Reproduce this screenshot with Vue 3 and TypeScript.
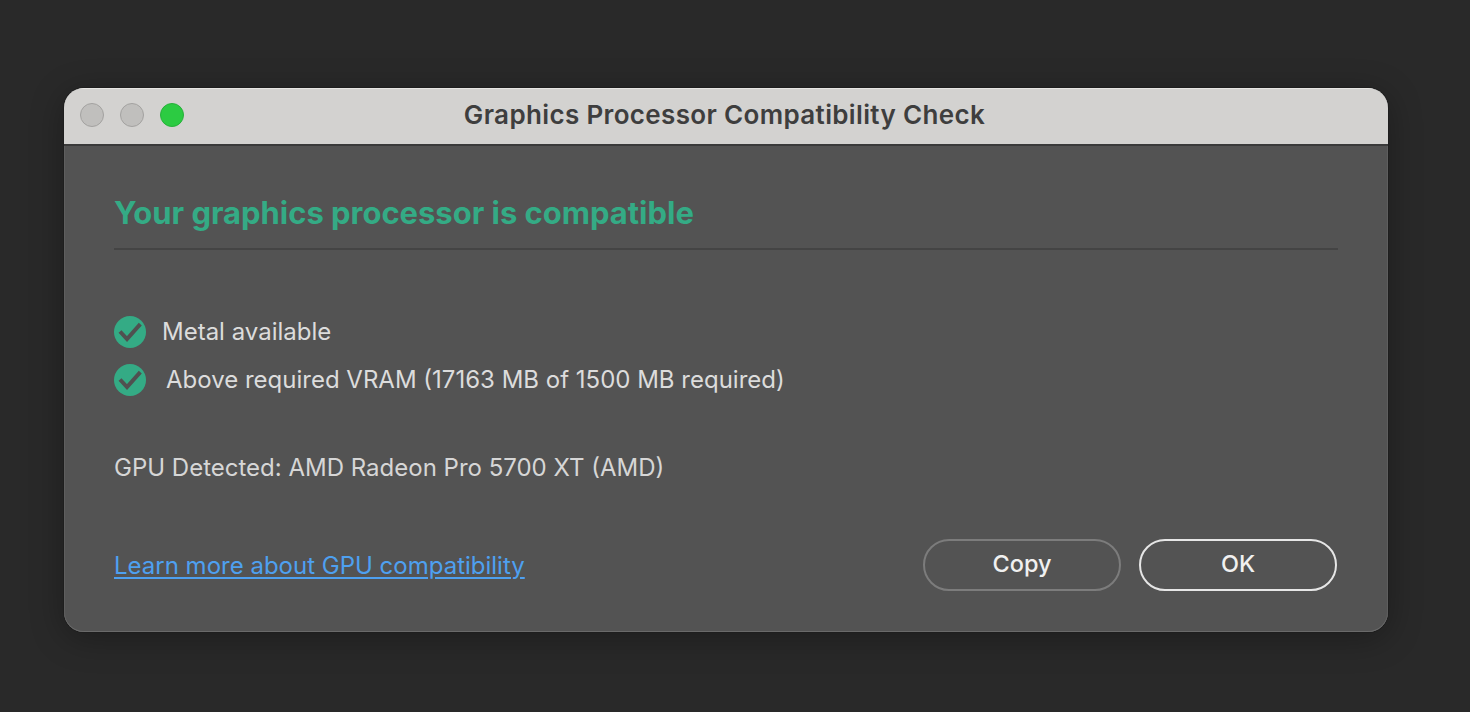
<script setup lang="ts">
const checks: { label: string; cls: string }[] = [
  { label: 'Metal available', cls: 'first' },
  { label: 'Above required VRAM (17163 MB of 1500 MB required)', cls: 'second' },
]
</script>

<template>
  <div class="page">
    <section class="window">
      <header class="titlebar">
        <div class="lights">
          <span class="light"></span>
          <span class="light"></span>
          <span class="light green"></span>
        </div>
        <h1 class="title">Graphics Processor Compatibility Check</h1>
      </header>
      <div class="content">
        <h2 class="heading">Your graphics processor is compatible</h2>
        <ul class="checks">
          <li v-for="c in checks" :key="c.label" class="check" :class="c.cls">
            <svg class="tick" viewBox="0 0 32 32" width="32" height="32" aria-hidden="true">
              <circle cx="16" cy="16" r="16" fill="#34ab85" />
              <path d="M6 15.5 L13 23 L26.3 8.2" fill="none" stroke="#505050" stroke-width="4" />
            </svg>
            <span>{{ c.label }}</span>
          </li>
        </ul>
        <p class="gpu">GPU Detected: AMD Radeon Pro 5700 XT (AMD)</p>
        <footer class="actions">
          <a class="link" href="#">Learn more about GPU compatibility</a>
          <div class="buttons">
            <button class="btn copy" type="button">Copy</button>
            <button class="btn ok" type="button">OK</button>
          </div>
        </footer>
      </div>
    </section>
  </div>
</template>

<style>
html, body { margin: 0; background: #292929; }
</style>

<style scoped>
.page {
  box-sizing: border-box;
  width: 1470px;
  height: 712px;
  padding: 88px 0 0 64px;
  overflow: hidden;
  background: #292929;
  font-family: Inter, "Liberation Sans", sans-serif;
}
.window {
  box-sizing: border-box;
  width: 1324px;
  height: 544px;
  display: flex;
  flex-direction: column;
  border-radius: 20px;
  overflow: hidden;
  background: #535353;
  box-shadow: inset 0 -1px 0 #6a6a6a, inset 1px 0 0 #5e5e5e, inset -1px 0 0 #5e5e5e, 0 0 0 1px #1e1e1e, 0 6px 34px rgba(0, 0, 0, 0.3);
}
.titlebar {
  position: relative;
  box-sizing: border-box;
  height: 58px;
  flex: none;
  display: flex;
  align-items: center;
  justify-content: center;
  background: #d3d2d0;
  border-top: 1px solid #e6e5e3;
  border-bottom: 2px solid #3a3a3a;
}
.lights {
  position: absolute;
  left: 16px;
  top: 14px;
  display: flex;
  gap: 16px;
}
.light {
  box-sizing: border-box;
  width: 24px;
  height: 24px;
  border-radius: 50%;
  background: #c0bfbd;
  border: 1px solid #a3a2a0;
}
.light.green {
  background: #2ccb42;
  border-color: #27b03a;
}
.title {
  margin: 0 3px 3px 0;
  font-size: 26px;
  font-weight: 600;
  letter-spacing: 0.35px;
  line-height: 32px;
  color: #3e3e3e;
}
.content {
  flex: 1;
  display: flex;
  flex-direction: column;
  padding: 0 50px;
}
.heading {
  margin: 47px 0 0;
  padding-bottom: 15px;
  height: 40px;
  line-height: 40px;
  font-size: 30.95px;
  font-weight: 700;
  color: #34ab85;
  border-bottom: 2px solid #444444;
}
.checks {
  list-style: none;
  margin: 66px 0 0;
  padding: 0;
  display: flex;
  flex-direction: column;
  gap: 16px;
}
.check {
  display: flex;
  align-items: center;
  height: 32px;
  font-size: 24px;
  color: #dcdcdc;
}
.check span { padding-bottom: 2px; }
.tick { flex: none; }
.first span { margin-left: 16px; }
.second span { margin-left: 20px; }
.gpu {
  margin: 56px 0 0;
  line-height: 32px;
  font-size: 24px;
  color: #d6d6d6;
}
.actions {
  margin-top: 55px;
  display: flex;
  align-items: center;
  justify-content: space-between;
}
.link {
  font-size: 24px;
  color: #4ea0f0;
  text-decoration: underline;
  text-underline-offset: 3px;
}
.buttons {
  display: flex;
  gap: 18px;
  margin-right: 1px;
}
.btn {
  box-sizing: border-box;
  width: 198px;
  height: 52px;
  border-radius: 26px;
  background: transparent;
  font-family: inherit;
  font-size: 23.5px;
  font-weight: 500;
  color: #f0f0f0;
  padding: 0 0 3px;
}
.copy { border: 2px solid #7c7c7c; }
.ok { border: 2px solid #e6e6e6; }
</style>
